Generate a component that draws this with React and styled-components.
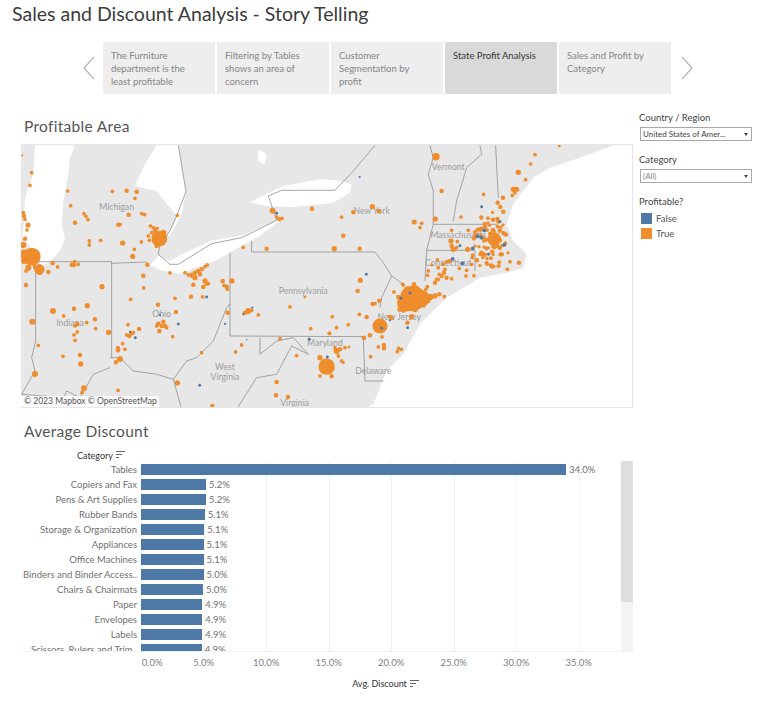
import React from 'react'
import styled, { createGlobalStyle } from 'styled-components'

const ORANGE = '#ef8c2c'
const BLUE = '#4e79a7'

const GlobalStyle = createGlobalStyle`
    html, body {
        margin: 0;
        padding: 0;
        background: #fff;
    }
    body {
        font-family: "Lato", "Open Sans", sans-serif;
        color: #555;
    }
`

const stories = [
    { id: 1, text: 'The Furniture department is the least profitable' },
    { id: 2, text: 'Filtering by Tables shows an area of concern' },
    { id: 3, text: 'Customer Segmentation by profit' },
    { id: 4, text: 'State Profit Analysis', active: true },
    { id: 5, text: 'Sales and Profit by Category' },
]

const discounts = [
    ['Tables', 34.0],
    ['Copiers and Fax', 5.2],
    ['Pens & Art Supplies', 5.2],
    ['Rubber Bands', 5.1],
    ['Storage & Organization', 5.05],
    ['Appliances', 5.0],
    ['Office Machines', 5.0],
    ['Binders and Binder Access..', 5.0],
    ['Chairs & Chairmats', 4.95],
    ['Paper', 4.9],
    ['Envelopes', 4.9],
    ['Labels', 4.9],
    ['Scissors, Rulers and Trim..', 4.85],
]
const shown = [34.0, 5.2, 5.2, 5.1, 5.1, 5.1, 5.1, 5.0, 5.0, 4.9, 4.9, 4.9, 4.9]
const ticks = [0, 5, 10, 15, 20, 25, 30, 35]
const PX_PER_PERCENT = 12.5

// map data, traced at 3x so [x, y, r] are crop coordinates
const westDots = [
    [67,43,3],[95,95,5],[90,133,5],[203,150,5],[337,151,5],[380,149,6],[410,152,6],[405,172,5],[212,194,5],[252,218,5],
    [258,226,5],[264,236,5],[225,245,6],[84,252,7],[81,267,5],[70,215,5],[72,225,6],[75,235,5],[355,251,6],[360,251,5],
    [386,221,6],[425,218,5],[434,221,5],[532,223,5],[818,209,8],[936,203,6],[830,228,5],[838,235,6],[846,232,5],[800,323,6],
    [730,319,5],[268,300,5],[268,312,5],[302,298,5],[368,306,7],[424,303,5],[403,325,5],[398,346,7],[478,293,21],[451,255,5],
    [460,260,5],[471,262,5],[455,275,5],[448,298,5],[445,285,5],[465,270,6],[490,275,8],[470,315,6],[95,347,24],[72,340,13],
    [75,293,6],[70,312,8],[72,360,8],[85,380,8],[78,390,5],[118,385,14],[105,378,6],[120,395,6],[145,393,6],[158,367,6],
    [173,378,5],[215,371,6],[222,372,6],[224,362,5],[235,370,5],[442,371,6],[430,404,6],[431,441,5],[510,396,5],[78,432,6],
    [306,437,7],[392,475,5],[525,472,5],[474,491,6],[528,513,6],[573,467,6],[608,468,5],[555,395,5],[565,402,5],[575,400,5],
    [585,395,6],[595,390,6],[605,385,6],[615,377,5],[622,372,5],[585,410,7],[600,400,6],[575,405,5],[580,431,6],[610,438,6],
    [615,420,7],[620,428,6],[625,428,5],[668,420,6],[672,433,5],[680,437,6],[682,445,5],[696,420,7],[683,515,6],[745,510,8],
    [735,515,6],[755,508,5],[775,522,5],[870,498,5],[915,468,4],[932,563,5],[988,577,5],[840,593,5],[725,612,5],[707,633,5],
    [890,644,5],[605,635,5],[475,548,6],[490,542,6],[495,555,6],[478,570,6],[485,555,6],[470,555,5],[500,560,5],[518,587,5],
    [384,551,5],[417,564,6],[395,577,6],[388,585,6],[400,575,5],[380,582,5],[368,608,5],[354,622,6],[354,628,6],[375,625,5],
    [360,654,8],[348,664,6],[159,510,8],[191,525,5],[222,503,6],[262,494,7],[285,535,6],[287,563,5],[97,542,8],[260,545,5],
    [232,550,6],[225,555,5],[222,582,5],[232,573,5],[225,598,5],[326,574,7],[115,613,5],[189,646,5],[240,642,6],[242,669,7],
    [105,699,8],[252,742,8],[246,755,5],[354,748,5],[532,726,7],[637,795,6],[830,723,6],[828,763,6],[864,768,6],
]
const westBlue = [
    [830,217,4],[620,468,4],[675,549,3],[730,520,3],[757,500,3],[928,595,4],[740,596,2],[480,522,3],[535,549,4],
    [406,590,4],[390,573,3],[599,733,4],
]
const eastDots = [
    [348,47,10],[645,41,5],[632,69,5],[595,94,7],[617,116,5],[718,15,4],[365,150,6],[491,160,5],[549,170,6],[533,185,6],
    [541,198,6],[550,212,6],[580,145,7],[590,145,7],[585,155,5],[577,163,5],[157,197,7],[100,214,6],[176,210,6],[65,228,5],
    [283,243,7],[305,247,5],[300,260,5],[346,234,7],[423,228,5],[70,284,6],[43,323,7],[119,323,6],[523,295,18],[278,472,34],
    [305,472,22],[258,485,24],[330,468,9],[345,465,7],[358,460,6],[318,445,5],[282,430,6],[250,432,5],[222,453,5],[235,468,6],
    [373,467,5],[322,437,5],[345,425,6],[355,415,5],[365,405,6],[180,555,20],[208,527,5],[215,530,6],[140,528,6],[118,520,5],
    [85,551,5],[50,560,5],[37,527,5],[29,577,5],[158,489,6],[165,488,5],[178,479,6],[113,450,6],[121,418,7],[248,430,5],
    [132,590,6],[150,583,6],[186,588,5],[175,618,5],[192,612,6],[192,622,6],[232,632,5],[236,622,5],[244,625,5],[152,647,5],
    [262,545,6],[275,527,7],[50,630,8],[60,625,6],[75,620,5],[87,618,4],[45,620,5],[55,645,5],[65,660,5],[70,665,4],
    [20,677,22],[0,650,7],[35,706,6],[0,705,5],[395,268,5],[445,268,5],[393,300,7],[412,302,5],[395,315,6],[400,325,7],
    [410,320,5],[443,325,7],[457,350,5],[352,357,5],[335,372,4],[325,390,5],[323,403,5],[380,362,5],[390,360,6],[370,370,5],
    [355,380,5],[375,385,5],[372,395,6],[380,410,6],[395,413,5],[358,400,5],[350,415,5],[418,382,5],[438,405,5],[462,404,5],
    [440,388,5],[455,370,5],[597,365,6],[570,362,5],[562,385,5],[537,375,5],[290,440,6],[262,445,8],[240,505,7],[285,505,8],
    [310,492,7],[325,480,6],[250,510,5],
]
const eastBlue = [
    [119,108,3],[485,197,4],[540,242,4],[493,268,5],[473,286,5],[484,290,5],[553,312,5],[506,340,4],[420,314,4],[458,322,5],
    [428,367,5],[398,354,5],[139,400,4],[270,456,4],[243,472,4],[185,562,4],[210,538,3],[263,560,4],[22,648,4],
]

// the Boston area is too dense to trace one by one, so scatter it
const bostonDots = Array.from({ length: 70 }, (_, i) => {
    const angle = i * 2.399
    const dist = 7.2 * Math.sqrt(i + 1) + Math.sin(i * 7.3) * 7
    return [
        510 + Math.cos(angle) * dist * 0.85 + Math.sin(i * 3.1) * 5,
        302 + Math.sin(angle) * dist * 1.4 + Math.cos(i * 5.7) * 6,
        4.5 + (i % 3) * 0.8,
    ]
})

// west shapes are in the left crop's coordinates, east shapes in the right crop's
const westLakes = [
    'M105 13 L225 13 L210 50 L205 100 L190 180 L185 250 L195 290 L180 330 L150 362 L125 375 L100 330 L65 285 L70 260 L75 170 L100 100 Z',
    'M470 13 L535 13 L558 150 L545 220 L515 275 L500 290 L530 225 L470 150 L405 135 L435 70 Z',
    'M450 372 L475 345 L510 360 L535 345 L630 300 L730 282 L835 236 L860 226 L770 290 L730 312 L640 362 L600 375 L540 398 L480 388 Z',
    'M750 185 L800 158 L850 135 L960 115 L1010 118 L1055 130 L1050 155 L1000 185 L960 190 L880 198 L800 195 Z',
    'M775 25 L800 40 L795 70 L775 60 Z',
]
const ocean = 'M880 13 L780 50 L690 80 L640 110 L580 190 L560 250 L580 300 L620 340 L610 380 L560 395 L480 410 L380 470 L300 550 L250 640 L200 690 L160 790 L130 805 L938 805 L938 13 Z'

const westBorders = [
    'M535 13 L558 152 L530 225 L510 270 L480 310 L475 340 L510 370 L535 370 L635 308 L725 290 L830 238 L805 165 L845 148 L1005 148 L1060 90 L1125 13',
    'M105 362 L335 362 M107 362 L107 600 L95 650 L105 690 L65 760',
    'M335 362 L335 650 M335 367 L440 363',
    'M330 650 L360 650 L400 690 L470 700 L520 715 L560 660 L590 650 L640 600 L680 500 L690 488',
    'M690 335 L690 585 L1090 587 L1095 720 L1150 720',
    'M755 300 L755 333 L1125 333 L1150 365 L1175 405 L1210 430',
    'M780 590 L780 640 L830 600 L880 590 L925 640 L875 615 L830 700 L770 710 L710 805',
    'M520 715 L545 805 M65 760 L190 770 L200 750 L240 770 L280 700 L330 680',
]
const eastBorders = [
    'M215 405 L185 470 L180 500',
    'M330 13 L340 50 L325 100 L340 150 L340 250 L320 328 L315 420',
    'M480 13 L485 40 L440 80 L410 180 L400 240',
    'M527 13 L535 170 M340 250 L530 250 M320 328 L465 328 L465 390',
]

const westLabels = [
    ['Michigan', 350, 208], ['Ohio', 485, 528], ['Indiana', 210, 556], ['Pennsylvania', 910, 460],
    ['Maryland', 975, 615], ['West', 675, 686], ['Virginia', 675, 718], ['Virginia', 884, 794],
]
const eastLabels = [
    ['New York', 155, 220], ['Vermont', 385, 86], ['Massachusetts', 415, 292], ['Connecticut', 385, 376],
    ['New Jersey', 238, 537], ['Delaware', 160, 698],
]

const Page = styled.div`
    width: 765px;
    height: 702px;
    overflow: hidden;
`

const Title = styled.h1`
    margin: 0;
    padding: 3px 0 0 12px;
    height: 42px;
    box-sizing: border-box;
    font-size: 19.5px;
    line-height: 22px;
    font-weight: 400;
    color: #3c3c3c;
`

const StoryBar = styled.nav`
    display: flex;
    align-items: center;
    height: 52px;
    padding-left: 82px;
`

const Arrow = styled.svg`
    width: 14px;
    height: 24px;
    flex: none;
    margin: ${p => (p.$next ? '0 0 0 7px' : '0 7px 0 0')};
    fill: none;
    stroke: #b5b5b5;
    stroke-width: 1.2;
`

const StoryTab = styled.div`
    width: 112px;
    height: 52px;
    box-sizing: border-box;
    margin-right: 2px;
    padding: 7px 20px 0 8px;
    font-size: 9.5px;
    line-height: 13px;
    background: ${p => (p.$active ? '#d9d9d9' : '#eeeeee')};
    color: ${p => (p.$active ? '#333' : '#858585')};
`

const Body = styled.div`
    display: flex;
    padding-top: 14px;
`

const MainColumn = styled.main`
    width: 612px;
    margin-left: 21px;
    flex: none;
`

const SectionTitle = styled.h2`
    margin: 0;
    padding: 8px 0 0 3px;
    height: 36px;
    box-sizing: border-box;
    font-size: 15.5px;
    line-height: 20px;
    font-weight: 400;
    color: #555;
    letter-spacing: 0.3px;
`

const MapFrame = styled.div`
    position: relative;
    width: 612px;
    height: 264px;
    box-sizing: border-box;
    border: 1px solid #e6e6e6;
    border-left: none;
    overflow: hidden;
`

const MapDrawing = styled.svg`
    display: block;
    width: 612px;
    height: 264px;
    background: #e7e7e7;
`

const Attribution = styled.div`
    position: absolute;
    left: 0;
    bottom: 0;
    padding: 0 2px 0 3px;
    font-size: 8.5px;
    line-height: 11px;
    background: rgba(255, 255, 255, 0.85);
    color: #555;
`

const DiscountTitle = styled(SectionTitle)`
    height: 41px;
    padding-top: 13px;
`

const HeaderLabel = styled.div`
    display: flex;
    align-items: center;
    justify-content: ${p => (p.$center ? 'center' : 'flex-end')};
    gap: 3px;
    font-size: 9px;
    line-height: 11px;
    color: #333;
`

const CategoryHeader = styled(HeaderLabel)`
    width: 105px;
    height: 12px;
`

const Plot = styled.div`
    position: relative;
    width: 612px;
    height: 190px;
    overflow: hidden;
    border-bottom: 1px solid #f3f3f3;
`

const GridLine = styled.div`
    position: absolute;
    top: 0;
    bottom: 0;
    width: 1px;
    background: #f1f1f1;
`

const Rows = styled.div`
    position: relative;
    padding-top: 3px;
`

const Row = styled.div`
    display: flex;
    align-items: center;
    height: 11px;
    margin-bottom: 4px;
`

const RowLabel = styled.div`
    width: 116px;
    margin-right: 4px;
    flex: none;
    text-align: right;
    font-size: 9.5px;
    white-space: nowrap;
    color: #707070;
`

const Bar = styled.div`
    height: 11px;
    flex: none;
    background: ${BLUE};
`

const BarValue = styled.div`
    margin-left: 3px;
    font-size: 9.5px;
    color: #707070;
`

const ScrollTrack = styled.div`
    position: absolute;
    right: 0;
    top: 0;
    bottom: 0;
    width: 12px;
    background: #f3f3f3;
`

const ScrollThumb = styled.div`
    height: 141px;
    background: #dedede;
`

const Axis = styled.div`
    display: flex;
    margin-left: 89px;
    padding-top: 5px;
    height: 16px;
`

const Tick = styled.div`
    width: 62.5px;
    flex: none;
    text-align: center;
    padding-left: ${p => (p.$first ? '22px' : '0')};
    box-sizing: border-box;
    font-size: 9.5px;
    line-height: 12px;
    color: #808080;
`

const AxisTitle = styled(HeaderLabel)`
    width: 730px;
    padding-top: 5px;
`

const Sidebar = styled.aside`
    width: 112px;
    margin-left: 7px;
    padding-top: 4px;
    flex: none;
`

const FilterLabel = styled.div`
    font-size: 9.5px;
    line-height: 12px;
    margin: ${p => p.$gap || 0}px 0 3px -1px;
    color: #444;
`

const Select = styled.div`
    display: flex;
    align-items: center;
    justify-content: space-between;
    height: 14px;
    box-sizing: border-box;
    border: 1px solid #a8a8a8;
    padding: 0 3px 0 2px;
    font-size: 8px;
    color: ${p => (p.$muted ? '#888' : '#444')};
    white-space: nowrap;
`

const Caret = styled.span`
    width: 0;
    height: 0;
    border-left: 2.5px solid transparent;
    border-right: 2.5px solid transparent;
    border-top: 3.5px solid #444;
`

const LegendRow = styled.div`
    display: flex;
    align-items: center;
    gap: 4px;
    height: 15px;
    margin-left: 1px;
    font-size: 9.5px;
    color: #555;
`

const Swatch = styled.span`
    width: 11px;
    height: 11px;
    background: ${p => p.$color};
`

const SortIcon = () => (
    <svg width="10" height="8" viewBox="0 0 10 8" fill="#666">
        <rect x="0" y="0" width="9" height="1" />
        <rect x="0" y="3" width="6" height="1" />
        <rect x="0" y="6" width="3" height="1" />
    </svg>
)

const Dots = ({ items, color }) => items.map(([x, y, r], i) => (
    <circle key={i} cx={x} cy={y} r={r * 1.12} fill={color} />
))

const Lines = ({ items }) => items.map((d, i) => (
    <path key={i} d={d} fill="none" stroke="#8f8f8f" strokeWidth="2.4" />
))

const Labels = ({ items }) => items.map(([name, x, y], i) => (
    <text key={i} x={x} y={y} textAnchor="middle" fontSize="26" fill="#9c9c9c" fontFamily="Lato, sans-serif">{name}</text>
))

const MapView = () => (
    <MapFrame>
        <MapDrawing viewBox="0 0 612 264">
            <g transform="scale(0.3333) translate(-63 -12)">
                {westLakes.map((d, i) => <path key={i} d={d} fill="#fff" />)}
                <g transform="translate(960 0)"><path d={ocean} fill="#fff" /></g>
                <Lines items={westBorders} />
                <Labels items={westLabels} />
                <g transform="translate(960 0)">
                    <Lines items={eastBorders} />
                    <Labels items={eastLabels} />
                </g>
                <Dots items={westDots} color={ORANGE} />
                <Dots items={westBlue} color={BLUE} />
                <g transform="translate(960 0)">
                    <Dots items={eastDots} color={ORANGE} />
                    <Dots items={bostonDots} color={ORANGE} />
                    <Dots items={eastBlue} color={BLUE} />
                </g>
            </g>
        </MapDrawing>
        <Attribution>© 2023 Mapbox © OpenStreetMap</Attribution>
    </MapFrame>
)

const DiscountChart = () => (
    <>
        <CategoryHeader>Category <SortIcon /></CategoryHeader>
        <Plot>
            {ticks.map(t => (
                <GridLine key={t} style={{ left: 120 + t * PX_PER_PERCENT }} />
            ))}
            <Rows>
                {discounts.map(([name, value], i) => (
                    <Row key={name}>
                        <RowLabel>{name}</RowLabel>
                        <Bar style={{ width: value * PX_PER_PERCENT }} />
                        <BarValue>{shown[i].toFixed(1)}%</BarValue>
                    </Row>
                ))}
            </Rows>
            <ScrollTrack><ScrollThumb /></ScrollTrack>
        </Plot>
        <Axis>
            {ticks.map((t, i) => <Tick key={t} $first={i === 0}>{t.toFixed(1)}%</Tick>)}
        </Axis>
        <AxisTitle $center>Avg. Discount <SortIcon /></AxisTitle>
    </>
)

const App = () => (
    <Page>
        <GlobalStyle />
        <Title>Sales and Discount Analysis - Story Telling</Title>
        <StoryBar>
            <Arrow viewBox="0 0 14 24" $prev><path d="M12 1 L2 12 L12 23" /></Arrow>
            {stories.map(s => <StoryTab key={s.id} $active={s.active}>{s.text}</StoryTab>)}
            <Arrow viewBox="0 0 14 24" $next><path d="M2 1 L12 12 L2 23" /></Arrow>
        </StoryBar>
        <Body>
            <MainColumn>
                <SectionTitle>Profitable Area</SectionTitle>
                <MapView />
                <DiscountTitle>Average Discount</DiscountTitle>
                <DiscountChart />
            </MainColumn>
            <Sidebar>
                <FilterLabel>Country / Region</FilterLabel>
                <Select>United States of Amer... <Caret /></Select>
                <FilterLabel $gap={13}>Category</FilterLabel>
                <Select $muted>(All) <Caret /></Select>
                <FilterLabel $gap={13}>Profitable?</FilterLabel>
                <LegendRow><Swatch $color={BLUE} />False</LegendRow>
                <LegendRow><Swatch $color={ORANGE} />True</LegendRow>
            </Sidebar>
        </Body>
    </Page>
)

export default App
